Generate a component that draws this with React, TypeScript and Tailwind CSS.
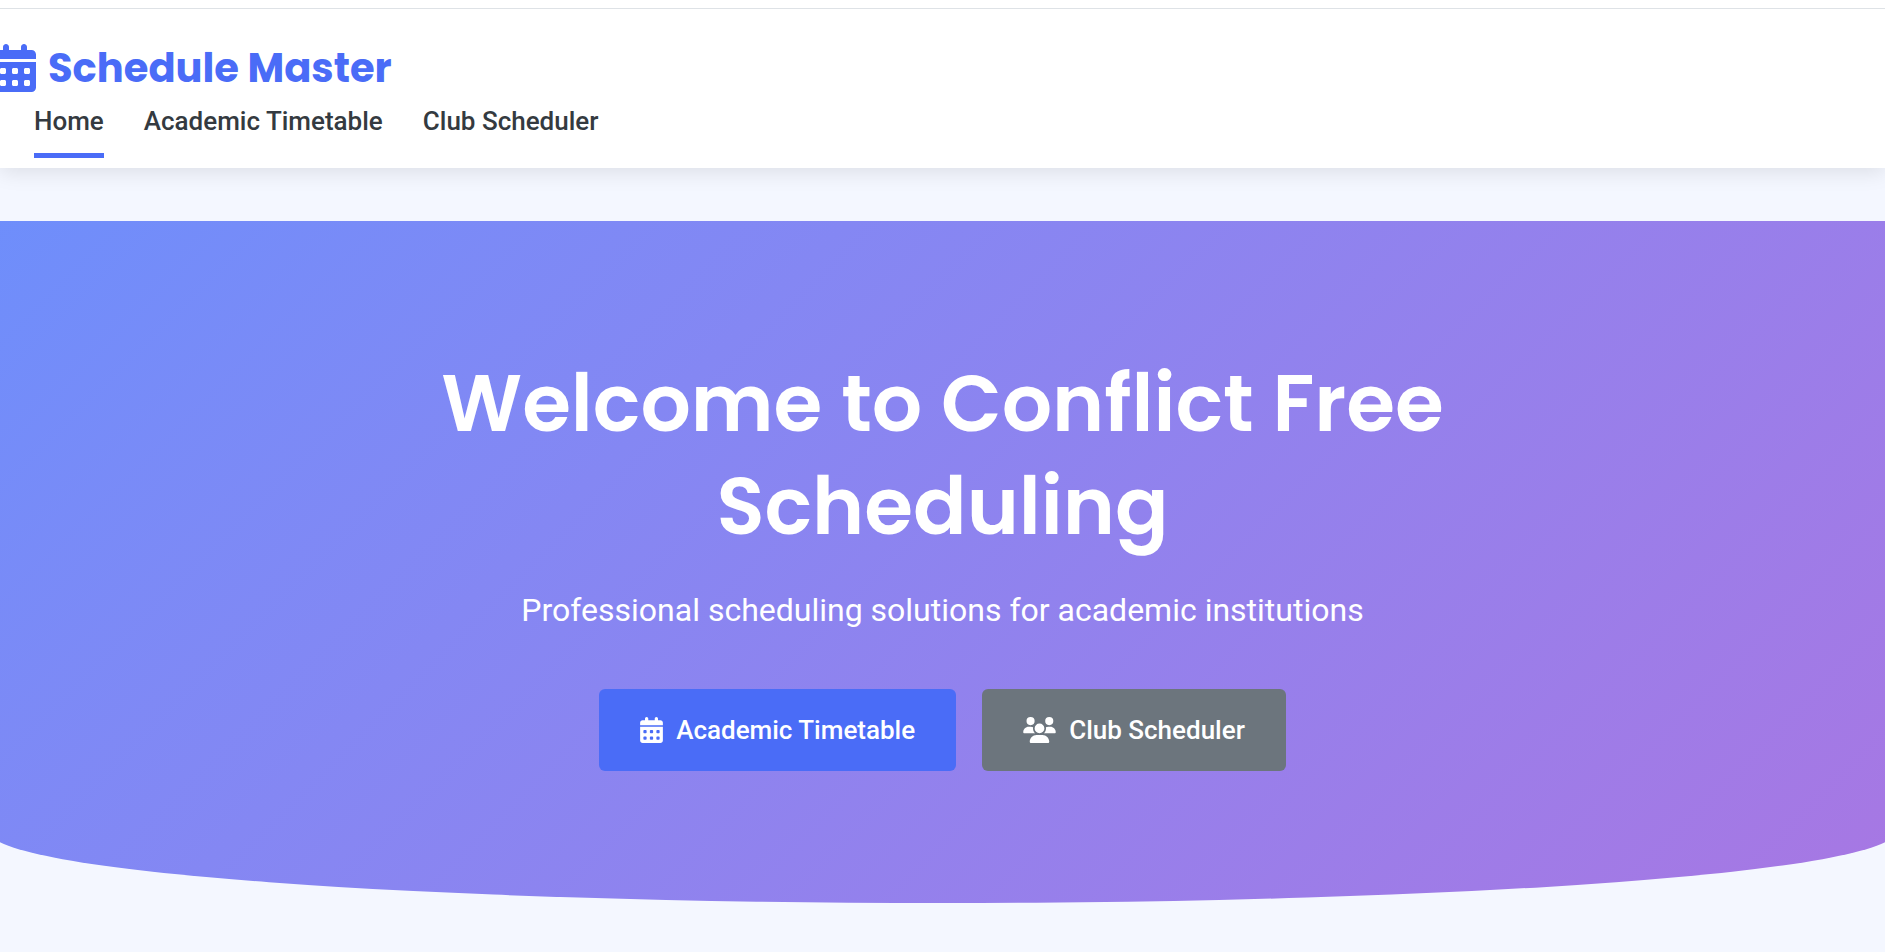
import React from "react";
import { FaCalendarDays, FaUsers } from "react-icons/fa6";

const links = ["Home", "Academic Timetable", "Club Scheduler"];

export default function App() {
  return (
    <div className="min-h-screen overflow-x-hidden bg-[#f4f7ff] pb-12 font-['Roboto',sans-serif] text-[#343a40]">
      <header className="relative bg-white shadow-[0_4px_20px_rgba(0,0,0,0.1)]">
        <div className="h-[9px] border-b border-[#dee2e6]" />
        <div className="flex flex-col items-start pt-8 pb-[10px]">
          <a href="#" className="-ml-[6px] flex items-center gap-3 font-['Poppins','Open_Sans',sans-serif] text-[40px] leading-[54px] font-bold text-[#4a6cf7]">
            <FaCalendarDays className="h-12 w-[42px]" />
            Schedule Master
          </a>
          <nav className="ml-[34px] flex gap-10 text-[26px] font-medium">
            {links.map((label, i) => (
              <a
                key={label}
                href="#"
                className={i === 0 ? "border-b-[5px] border-[#4a6cf7] pt-2 pb-[14px] leading-9" : "pt-2 pb-[14px] leading-9"}
              >
                {label}
              </a>
            ))}
          </nav>
        </div>
      </header>
      <main>
        <section className="-mx-[10px] mt-[53px] flex flex-col items-center rounded-b-[50%_71px] bg-linear-135 from-[#6e8efb] to-[#a777e3] px-8 pt-[131px] pb-[132px] text-center text-white">
          <h1 className="max-w-[1100px] font-['Poppins','Open_Sans',sans-serif] text-[79px] leading-[103px] font-semibold">
            Welcome to Conflict Free Scheduling
          </h1>
          <p className="mt-[25px] text-[32px] leading-[54px]">Professional scheduling solutions for academic institutions</p>
          <div className="mt-[52px] flex gap-[26px] text-[26px] font-medium">
            <button className="flex h-[82px] items-center gap-[13px] rounded-md bg-[#4a6cf7] px-[41px]">
              <FaCalendarDays className="h-[26px] w-[23px]" />
              Academic Timetable
            </button>
            <button className="flex h-[82px] items-center gap-[13px] rounded-md bg-[#6c757d] px-[41px]">
              <FaUsers className="h-[26px] w-[33px]" />
              Club Scheduler
            </button>
          </div>
        </section>
      </main>
    </div>
  );
}
